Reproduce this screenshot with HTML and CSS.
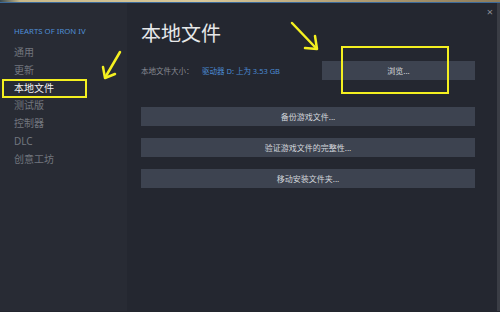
FILE: index.html
```html
<!DOCTYPE html>
<html lang="zh-CN">
<head>
  <meta charset="UTF-8" />
  <title>本地文件</title>
  <link rel="stylesheet" href="styles.css">
</head>
<body>
  <div class="backdrop"></div>
  <div class="window">
    <div class="sidebar">
      <div class="game-title">HEARTS OF IRON IV</div>
      <ul class="menu">
        <li>通用</li>
        <li>更新</li>
        <li class="active">本地文件</li>
        <li>测试版</li>
        <li>控制器</li>
        <li>DLC</li>
        <li>创意工坊</li>
      </ul>
    </div>
    <div class="main">
      <span class="close">×</span>
      <h1>本地文件</h1>
      <div class="size-row">
        <span class="label">本地文件大小：</span>
        <span class="drive">驱动器 D: 上为 3.53 GB</span>
        <button class="btn browse">浏览...</button>
      </div>
      <div class="actions">
        <button class="btn">备份游戏文件...</button>
        <button class="btn">验证游戏文件的完整性...</button>
        <button class="btn">移动安装文件夹...</button>
      </div>
    </div>
    <div class="edge"></div>

    <div class="mark mark-menu"></div>
    <div class="mark mark-browse"></div>
    <svg class="arrow arrow-left" width="30" height="34" viewBox="0 0 30 34">
      <path d="M22 3 L8 27" stroke="#f4f020" stroke-width="2.5" fill="none" stroke-linecap="round"/>
      <path d="M5 18 L7 29 L17 25" stroke="#f4f020" stroke-width="2.5" fill="none" stroke-linecap="round" stroke-linejoin="round"/>
    </svg>
    <svg class="arrow arrow-right" width="34" height="34" viewBox="0 0 34 34">
      <path d="M4 3 L27 27" stroke="#f4f020" stroke-width="2.5" fill="none" stroke-linecap="round"/>
      <path d="M27 16 L29 29 L17 28" stroke="#f4f020" stroke-width="2.5" fill="none" stroke-linecap="round" stroke-linejoin="round"/>
    </svg>
  </div>
</body>
</html>
```

FILE: styles.css
```css
* { box-sizing: border-box; margin: 0; padding: 0; }
body {
  width: 500px;
  height: 312px;
  overflow: hidden;
  background: #23262e;
  font-family: "Noto Sans", "Noto Sans CJK SC", sans-serif;
}
.backdrop {
  height: 3px;
  background: linear-gradient(90deg, #3a4a50 0%, #c9b98a 4%, #d8c89a 40%, #b29e74 70%, #8e7c5a 100%);
  border-bottom: 1px solid #3c6a9a;
}
.window {
  position: relative;
  display: flex;
  height: 308px;
}
.sidebar {
  width: 127px;
  background: #282b34;
  padding: 23px 0 0 14px;
}
.game-title {
  color: #4f8fd6;
  font-size: 7.8px;
  margin-bottom: 8px;
}
.menu {
  list-style: none;
}
.menu li {
  color: #72767e;
  font-size: 10px;
  line-height: 17.8px;
}
.menu li.active {
  color: #f2f2f2;
}
.main {
  position: relative;
  flex: 1;
  background: #242730;
  padding: 15px 22px 0 14px;
}
.close {
  position: absolute;
  right: 4px;
  top: 1px;
  color: #8a8d94;
  font-size: 11px;
}
h1 {
  color: #e6e7e9;
  font-weight: 400;
  font-size: 20px;
  line-height: 30px;
  margin-bottom: 13px;
  font-family: "Noto Sans CJK SC", sans-serif;
}
.size-row {
  display: flex;
  align-items: center;
  font-size: 7.5px;
  margin-bottom: 27px;
}
.label {
  color: #868a92;
  width: 61px;
}
.drive {
  color: #4b8bd4;
}
.btn {
  background: #3d4350;
  border: none;
  color: #d3d6db;
  font-family: "Noto Sans CJK SC", sans-serif;
  font-size: 8px;
  height: 19px;
}
.browse {
  margin-left: auto;
  width: 153px;
}
.actions {
  display: flex;
  flex-direction: column;
  gap: 12px;
}
.edge {
  width: 3px;
  background: #3a3d45;
}
.mark {
  position: absolute;
  border: 2px solid #f4f020;
}
.mark-menu {
  left: 2px;
  top: 76px;
  width: 85px;
  height: 19px;
}
.mark-browse {
  left: 341px;
  top: 43px;
  width: 108px;
  height: 48px;
}
.arrow {
  position: absolute;
}
.arrow-left {
  left: 98px;
  top: 46px;
}
.arrow-right {
  left: 288px;
  top: 17px;
}
```
